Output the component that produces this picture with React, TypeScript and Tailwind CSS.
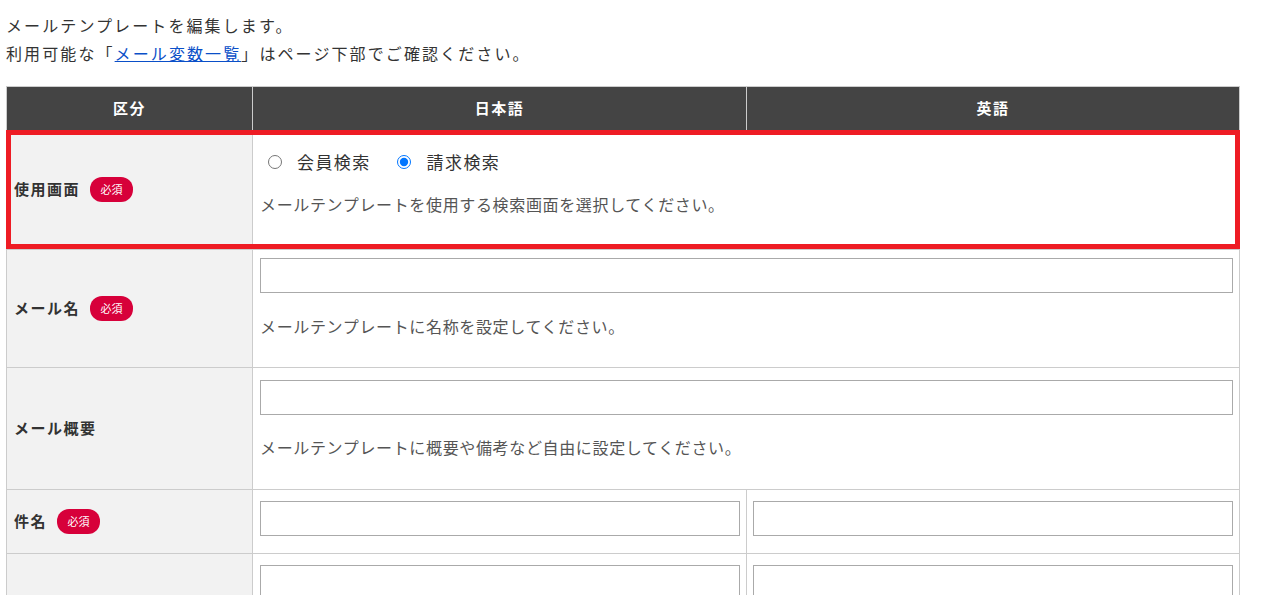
import React from "react";

const font = {
  fontFamily: '"Noto Sans CJK JP", "Noto Sans", sans-serif',
};

function RequiredBadge() {
  return (
    <span className="ml-[10px] inline-flex h-[25px] w-[43px] items-center justify-center rounded-[12px] bg-[#d7003a] text-[11px] leading-none text-white">
      必須
    </span>
  );
}

function Label({ text, required }: { text: string; required?: boolean }) {
  return (
    <div className="flex items-center border-r border-[#cccccc] bg-[#f2f2f2] pl-[7px]">
      <span className="text-[15px] font-bold tracking-[1.5px] text-[#333333]">
        {text}
      </span>
      {required && <RequiredBadge />}
    </div>
  );
}

function TextInput() {
  return (
    <input
      type="text"
      className="block h-[35px] w-full border border-[#aaaaaa] bg-white outline-none"
    />
  );
}

function Help({ text }: { text: string }) {
  return (
    <p className="text-[16px] leading-[24px] tracking-[0.65px] text-[#555555]">
      {text}
    </p>
  );
}

export default function App() {
  return (
    <div className="min-h-[595px] bg-white" style={font}>
      {/* intro */}
      <div className="pl-[6px] pt-[11px] text-[16px] leading-[28px] tracking-[2.1px] text-[#333333]">
        <p>メールテンプレートを編集します。</p>
        <p>
          利用可能な「
          <a href="#" className="text-[#0a4fc8] underline">
            メール変数一覧
          </a>
          」はページ下部でご確認ください。
        </p>
      </div>

      {/* table */}
      <div className="ml-[6px] mt-[19px] w-[1234px] border-l border-t border-[#cccccc]">
        {/* header */}
        <div className="grid h-[43px] grid-cols-[246px_494px_493px] bg-[#444444] text-[15px] font-bold tracking-[1.5px] text-white">
          <div className="flex items-center justify-center border-r border-[#cccccc]">
            区分
          </div>
          <div className="flex items-center justify-center border-r border-[#cccccc]">
            日本語
          </div>
          <div className="flex items-center justify-center border-r border-[#cccccc]">
            英語
          </div>
        </div>

        {/* 使用画面 */}
        <div className="relative grid grid-cols-[246px_987px] border-b border-[#cccccc]">
          <Label text="使用画面" required />
          <div className="border-r border-[#cccccc] px-[7px] pb-[33px] pt-[20px]">
            <div className="flex h-[24px] items-center pl-[8px] text-[17px] tracking-[1.4px] text-[#333333]">
              <label className="flex items-center">
                <input
                  type="radio"
                  name="screen"
                  className="m-0 h-[14px] w-[14px]"
                />
                <span className="ml-[15px]">会員検索</span>
              </label>
              <label className="ml-[26px] flex items-center">
                <input
                  type="radio"
                  name="screen"
                  defaultChecked
                  className="m-0 h-[14px] w-[14px]"
                />
                <span className="ml-[16px]">請求検索</span>
              </label>
            </div>
            <div className="mt-[18px]">
              <Help text="メールテンプレートを使用する検索画面を選択してください。" />
            </div>
          </div>
          <div className="pointer-events-none absolute -left-px top-0 right-0 bottom-0 border-[5px] border-[#ee1c24]" />
        </div>

        {/* メール名 */}
        <div className="grid grid-cols-[246px_987px] border-b border-[#cccccc]">
          <Label text="メール名" required />
          <div className="border-r border-[#cccccc] pb-[29px] pl-[7px] pr-[6px] pt-[8px]">
            <TextInput />
            <div className="mt-[21px]">
              <Help text="メールテンプレートに名称を設定してください。" />
            </div>
          </div>
        </div>

        {/* メール概要 */}
        <div className="grid grid-cols-[246px_987px] border-b border-[#cccccc]">
          <Label text="メール概要" />
          <div className="border-r border-[#cccccc] pb-[30px] pl-[7px] pr-[6px] pt-[12px]">
            <TextInput />
            <div className="mt-[20px]">
              <Help text="メールテンプレートに概要や備考など自由に設定してください。" />
            </div>
          </div>
        </div>

        {/* 件名 */}
        <div className="grid grid-cols-[246px_494px_493px] border-b border-[#cccccc]">
          <Label text="件名" required />
          <div className="border-r border-[#cccccc] pb-[17px] pl-[7px] pr-[6px] pt-[11px]">
            <TextInput />
          </div>
          <div className="border-r border-[#cccccc] pb-[17px] pl-[6px] pr-[6px] pt-[11px]">
            <TextInput />
          </div>
        </div>

        {/* 本文 */}
        <div className="grid grid-cols-[246px_494px_493px] border-b border-[#cccccc]">
          <Label text="" />
          <div className="border-r border-[#cccccc] pb-[16px] pl-[7px] pr-[6px] pt-[11px]">
            <textarea className="block h-[200px] w-full resize-none border border-[#aaaaaa] bg-white outline-none" />
          </div>
          <div className="border-r border-[#cccccc] pb-[16px] pl-[6px] pr-[6px] pt-[11px]">
            <textarea className="block h-[200px] w-full resize-none border border-[#aaaaaa] bg-white outline-none" />
          </div>
        </div>
      </div>
    </div>
  );
}
